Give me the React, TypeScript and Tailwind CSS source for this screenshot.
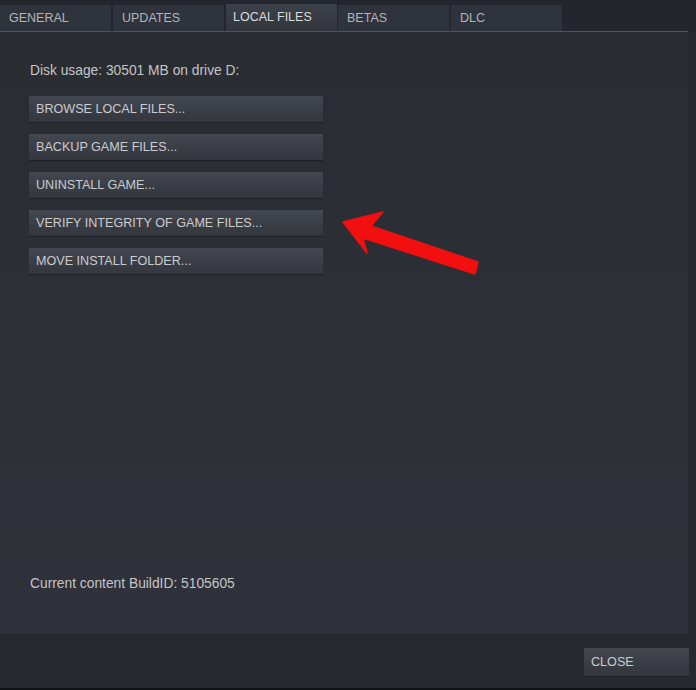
import React from 'react';

const tabs = ['GENERAL', 'UPDATES', 'LOCAL FILES', 'BETAS', 'DLC'];
const actions = [
    'BROWSE LOCAL FILES...',
    'BACKUP GAME FILES...',
    'UNINSTALL GAME...',
    'VERIFY INTEGRITY OF GAME FILES...',
    'MOVE INSTALL FOLDER...',
];

const SteamButton: React.FC<{ label: string; className?: string }> = ({ label, className }) => (
    <div
        className={
            'flex items-center bg-gradient-to-b from-[#43474f] to-[#33363d] text-[#cbcccf] text-[12.6px] shadow-[0_1px_0_#1e2025] ' +
            (className ?? '')
        }
    >
        {label}
    </div>
);

export default function App() {
    return (
        <div
            className="relative w-[696px] h-[690px] bg-[#23262d] flex flex-col overflow-hidden"
            style={{ fontFamily: '"Liberation Sans", Arial, sans-serif' }}
        >
            {/* tab strip */}
            <div className="flex h-[31px] pt-[5px] items-stretch">
                {tabs.map((t) => {
                    const active = t === 'LOCAL FILES';
                    return (
                        <div
                            key={t}
                            className={
                                active
                                    ? 'w-[111px] mr-[1px] -mt-[1px] pl-[7px] pt-[4px] bg-gradient-to-b from-[#3c4048] to-[#33363d] text-[#dadbdd] text-[12.5px]'
                                    : 'w-[111px] mr-[2px] pl-[9px] pt-[4px] bg-[#2f333b] text-[#b3b5b9] text-[12.5px]'
                            }
                        >
                            {t}
                        </div>
                    );
                })}
            </div>
            <div className="h-[1px] w-[688px] bg-[#50545b]" />

            {/* content panel */}
            <div className="flex-1 flex">
                <div className="w-[688px] bg-gradient-to-b from-[#292c31] to-[#2f323a] flex flex-col pl-[29px] pr-[365px]">
                    <div className="mt-[31px] h-[16px] leading-[16px] pl-[1px] text-[13.8px] text-[#c3c5c8]">
                        Disk usage: 30501 MB on drive D:
                    </div>
                    <div className="mt-[17px] flex flex-col gap-[12px]">
                        {actions.map((a) => (
                            <SteamButton key={a} label={a} className="h-[26px] pl-[7px]" />
                        ))}
                    </div>
                    <div className="mt-auto mb-[42px] leading-[16px] pl-[1px] text-[13.8px] text-[#c3c5c8]">
                        Current content BuildID: 5105605
                    </div>
                </div>
                <div className="flex-1 bg-[#25282e]" />
            </div>

            {/* footer */}
            <div className="h-[56px] bg-[#26292d] flex justify-end items-start pt-[14px] pr-[7px] border-b-[2px] border-[#111214]">
                <SteamButton label="CLOSE" className="w-[105px] h-[28px] pl-[7px]" />
            </div>

            {/* red annotation arrow */}
            <svg
                className="absolute left-0 top-0 pointer-events-none"
                width="696"
                height="690"
                viewBox="0 0 696 690"
            >
                <polygon
                    points="343,222 383,212 371,226 478,262 475,274 363,238 367,253"
                    fill="#f20f0f"
                    stroke="#f20f0f"
                    strokeWidth="1.5"
                    strokeLinejoin="round"
                />
            </svg>
        </div>
    );
}
